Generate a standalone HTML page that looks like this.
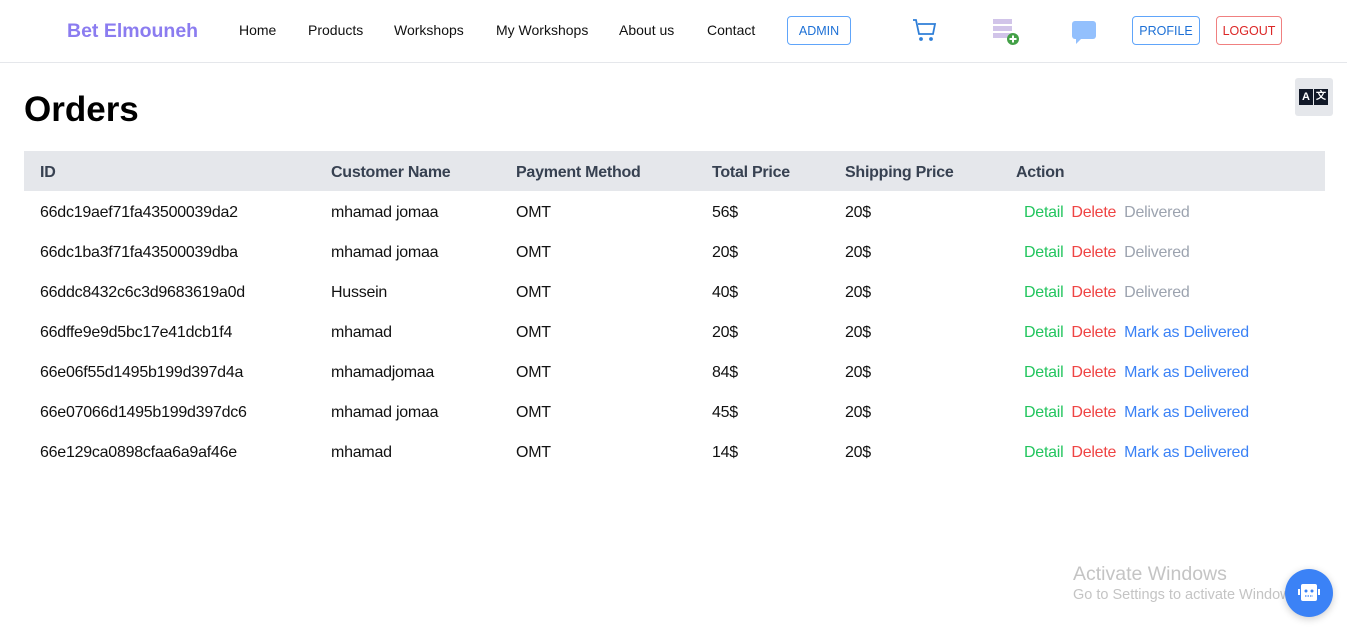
<!DOCTYPE html>
<html><head><meta charset="utf-8">
<style>
*{margin:0;padding:0;box-sizing:border-box}
body{width:1347px;height:638px;background:#fff;font-family:"Liberation Sans",sans-serif;position:relative;overflow:hidden}
.nav{height:63px;border-bottom:1px solid #e5e7eb;position:relative}
.abs{position:absolute}
.logo{left:67px;top:20px;font-size:19.5px;font-weight:bold;color:#8b7cf0}
.link{top:22px;font-size:14px;color:#111}
.btn{top:16px;height:29px;border:1px solid #60a5fa;border-radius:4px;font-size:12.5px;color:#1d70d6;display:flex;align-items:center;justify-content:center}
h1{position:absolute;left:24px;top:90px;font-size:35px;font-weight:bold;color:#000}
table{position:absolute;left:24px;top:151px;width:1301px;border-collapse:collapse;font-size:16px;letter-spacing:-0.25px}
th{background:#e5e7eb;height:40px;text-align:left;color:#374151;font-weight:bold;padding-left:16px;padding-top:3px}
td{height:40px;color:#111;padding-left:16px;padding-top:3px}
.g{color:#22c55e}.r{color:#ef4444}.gr{color:#9ca3af}.b{color:#3b82f6}
.act span{margin-left:8px}
</style></head><body>
<div class="nav">
<div class="abs logo">Bet Elmouneh</div>
<div class="abs link" style="left:239px">Home</div>
<div class="abs link" style="left:308px">Products</div>
<div class="abs link" style="left:394px">Workshops</div>
<div class="abs link" style="left:496px">My Workshops</div>
<div class="abs link" style="left:619px">About us</div>
<div class="abs link" style="left:707px">Contact</div>
<div class="abs btn" style="left:787px;width:64px">ADMIN</div>
<svg class="abs" style="left:912px;top:18px" width="26" height="24" viewBox="0 0 26 24" fill="none" stroke="#2f7fd8" stroke-width="1.8"><path d="M1 2h3l3 14h14l2-10H6"/><circle cx="9" cy="21" r="1" fill="#2f7fd8"/><circle cx="19" cy="21" r="1" fill="#2f7fd8"/></svg>
<svg class="abs" style="left:993px;top:18px" width="28" height="28" viewBox="0 0 28 28"><rect x="0" y="1" width="19" height="5" fill="#d1c4e9"/><rect x="0" y="8" width="19" height="5" fill="#d1c4e9"/><rect x="0" y="15" width="19" height="5" fill="#d1c4e9"/><circle cx="20" cy="21" r="6" fill="#43a047"/><path d="M20 17.5v7M16.5 21h7" stroke="#fff" stroke-width="2"/></svg>
<svg class="abs" style="left:1071px;top:20px" width="26" height="24" viewBox="0 0 26 24"><rect x="1" y="1" width="24" height="18" rx="3" fill="#93c0fd"/><path d="M5 18v6l6-6z" fill="#93c0fd"/></svg>
<div class="abs btn" style="left:1132px;width:68px;height:29px">PROFILE</div>
<div class="abs btn" style="left:1216px;width:66px;border-color:#f08080;color:#dc2626">LOGOUT</div>
</div>
<div class="abs" style="left:1295px;top:78px;width:38px;height:38px;background:#e5e7eb;border-radius:3px">
<div class="abs" style="left:4px;top:11px;width:14px;height:16px;background:#111827;color:#fff;font-size:11px;font-weight:bold;text-align:center;line-height:16px">A</div>
<div class="abs" style="left:19px;top:11px;width:14px;height:16px;background:#111827;color:#fff;font-size:10px;font-weight:bold;text-align:center;line-height:16px">文</div>
</div>
<h1>Orders</h1>
<table>
<tr><th style="width:291px">ID</th><th style="width:185px">Customer Name</th><th style="width:196px">Payment Method</th><th style="width:133px">Total Price</th><th style="width:171px">Shipping Price</th><th>Action</th></tr>
<tr><td>66dc19aef71fa43500039da2</td><td>mhamad jomaa</td><td>OMT</td><td>56$</td><td>20$</td><td class="act"><span class="g">Detail</span><span class="r">Delete</span><span class="gr">Delivered</span></td></tr>
<tr><td>66dc1ba3f71fa43500039dba</td><td>mhamad jomaa</td><td>OMT</td><td>20$</td><td>20$</td><td class="act"><span class="g">Detail</span><span class="r">Delete</span><span class="gr">Delivered</span></td></tr>
<tr><td>66ddc8432c6c3d9683619a0d</td><td>Hussein</td><td>OMT</td><td>40$</td><td>20$</td><td class="act"><span class="g">Detail</span><span class="r">Delete</span><span class="gr">Delivered</span></td></tr>
<tr><td>66dffe9e9d5bc17e41dcb1f4</td><td>mhamad</td><td>OMT</td><td>20$</td><td>20$</td><td class="act"><span class="g">Detail</span><span class="r">Delete</span><span class="b">Mark as Delivered</span></td></tr>
<tr><td>66e06f55d1495b199d397d4a</td><td>mhamadjomaa</td><td>OMT</td><td>84$</td><td>20$</td><td class="act"><span class="g">Detail</span><span class="r">Delete</span><span class="b">Mark as Delivered</span></td></tr>
<tr><td>66e07066d1495b199d397dc6</td><td>mhamad jomaa</td><td>OMT</td><td>45$</td><td>20$</td><td class="act"><span class="g">Detail</span><span class="r">Delete</span><span class="b">Mark as Delivered</span></td></tr>
<tr><td>66e129ca0898cfaa6a9af46e</td><td>mhamad</td><td>OMT</td><td>14$</td><td>20$</td><td class="act"><span class="g">Detail</span><span class="r">Delete</span><span class="b">Mark as Delivered</span></td></tr>
</table>
<div class="abs" style="left:1073px;top:563px;font-size:19.5px;color:#c4c4c4">Activate Windows</div>
<div class="abs" style="left:1073px;top:587px;font-size:14.5px;color:#c4c4c4;white-space:nowrap">Go to Settings to activate Windows.</div>
<div class="abs" style="left:1285px;top:569px;width:48px;height:48px;border-radius:50%;background:#3b82f6;box-shadow:0 2px 8px rgba(0,0,0,.2)">
<svg class="abs" style="left:12px;top:14px" width="24" height="20" viewBox="0 0 24 20"><rect x="4" y="1" width="16" height="17" rx="2" fill="#fff"/><rect x="1" y="6" width="2" height="6" fill="#fff"/><rect x="21" y="6" width="2" height="6" fill="#fff"/><circle cx="9" cy="8" r="1.5" fill="#3b82f6"/><circle cx="15" cy="8" r="1.5" fill="#3b82f6"/><path d="M8 13h8" stroke="#3b82f6" stroke-width="1.2" stroke-dasharray="1.5 1"/></svg>
</div>
</body></html>
